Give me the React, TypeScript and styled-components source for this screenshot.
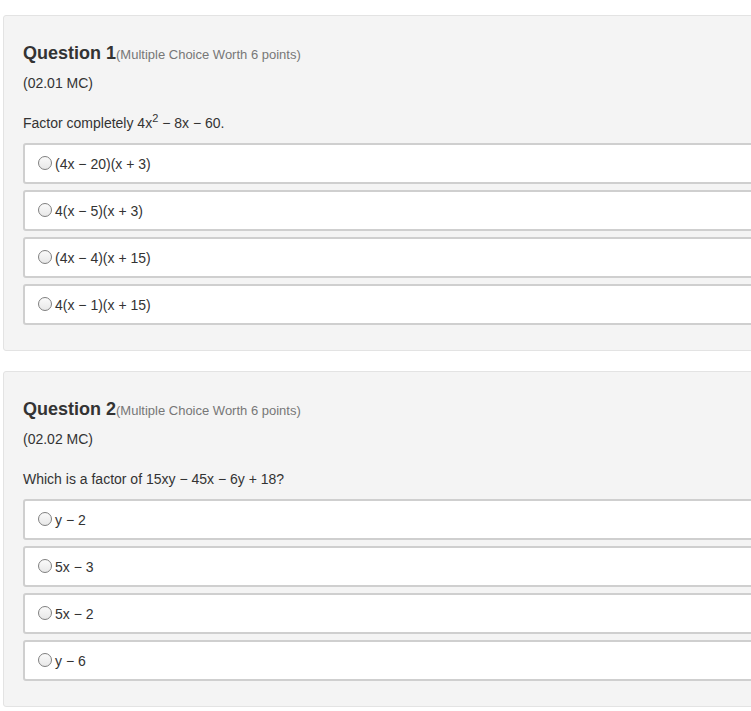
import React from 'react'
import styled, { createGlobalStyle } from 'styled-components'

const GlobalStyle = createGlobalStyle`
  html, body {
    margin: 0;
    padding: 0;
    background: #fff;
    overflow-x: hidden;
  }
  body {
    font-family: "Liberation Sans", Arial, sans-serif;
    color: #333;
  }
`

const Page = styled.div`
  padding: 15px 0 0 3px;
  display: flex;
  flex-direction: column;
  gap: 20px;
`

const Card = styled.section`
  width: 800px;
  background: #f4f4f4;
  border: 1px solid #e3e3e3;
  border-radius: 3px;
  padding: 27px 19px 25px 19px;
  box-sizing: border-box;
`

const Title = styled.h2`
  margin: 0;
  font-size: 18px;
  line-height: 20px;
  font-weight: bold;
  color: #333;
`

const Worth = styled.span`
  font-size: 13px;
  font-weight: normal;
  color: #777;
`

const Code = styled.div`
  margin-top: 8px;
  font-size: 14px;
  line-height: 20px;
`

const Prompt = styled.div`
  margin-top: 20px;
  margin-bottom: 10px;
  font-size: 14px;
  line-height: 20px;
  sup {
    font-size: 11px;
    line-height: 0;
    vertical-align: 6px;
  }
`

const Options = styled.div`
  display: flex;
  flex-direction: column;
  gap: 6px;
`

const Option = styled.label`
  display: flex;
  align-items: center;
  height: 41px;
  box-sizing: border-box;
  background: #fff;
  border: 2px solid #cfcfcf;
  border-radius: 3px;
  padding-left: 13px;
  font-size: 14px;
  color: #333;
`

const Radio = styled.span`
  width: 14px;
  height: 14px;
  box-sizing: border-box;
  border: 1px solid #808080;
  border-radius: 50%;
  background: linear-gradient(#fafafa, #e8e8e8);
  margin-right: 3px;
  margin-top: -2px;
  flex-shrink: 0;
`

type Q = {
  num: number
  code: string
  prompt: React.ReactNode
  choices: string[]
}

const questions: Q[] = [
  {
    num: 1,
    code: '(02.01 MC)',
    prompt: (
      <>
        Factor completely 4x<sup>2</sup> − 8x − 60.
      </>
    ),
    choices: ['(4x − 20)(x + 3)', '4(x − 5)(x + 3)', '(4x − 4)(x + 15)', '4(x − 1)(x + 15)'],
  },
  {
    num: 2,
    code: '(02.02 MC)',
    prompt: 'Which is a factor of 15xy − 45x − 6y + 18?',
    choices: ['y − 2', '5x − 3', '5x − 2', 'y − 6'],
  },
]

const App = () => {
  return (
    <>
      <GlobalStyle />
      <Page>
        {questions.map((q) => (
          <Card key={q.num}>
            <Title>
              Question {q.num}
              <Worth>(Multiple Choice Worth 6 points)</Worth>
            </Title>
            <Code>{q.code}</Code>
            <Prompt>{q.prompt}</Prompt>
            <Options>
              {q.choices.map((c) => (
                <Option key={c}>
                  <Radio />
                  {c}
                </Option>
              ))}
            </Options>
          </Card>
        ))}
      </Page>
    </>
  )
}

export default App
